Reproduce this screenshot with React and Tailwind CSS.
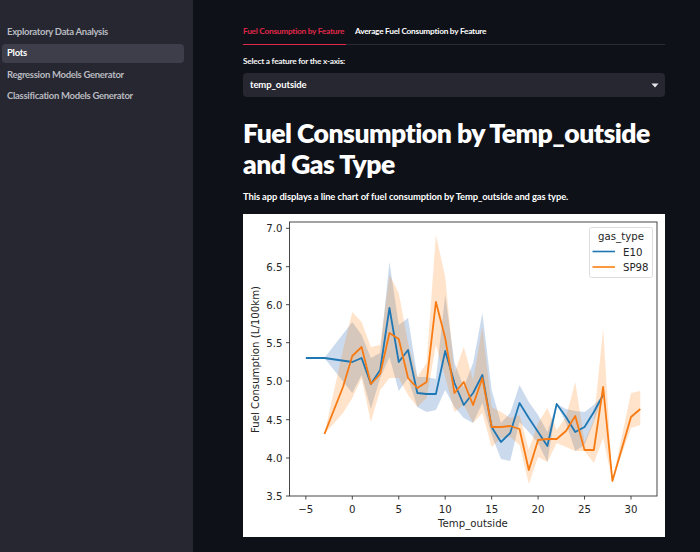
import React from 'react';

const navItems = ['Exploratory Data Analysis', 'Plots', 'Regression Models Generator', 'Classification Models Generator'];

// [temp, line y, band top, band bottom] in picture pixels
const e10 = [
  [-5, 358, 358, 358], [-3, 358, 358, 358], [0, 362, 322, 393], [1, 358, 335, 375], [2, 384, 358, 409],
  [3, 370, 353, 378], [4, 308, 262, 357], [5, 362, 325, 391], [6, 350, 318, 378], [7, 393, 377, 407],
  [8, 394, 377, 412], [9, 394, 379, 410], [10, 351, 295, 390], [11, 383, 363, 407], [12, 405, 387, 418],
  [13, 393, 363, 423], [14, 375, 313, 403], [15, 427, 390, 435], [16, 442, 423, 459], [17, 433, 413, 461],
  [18, 403, 385, 422], [19, 418, 402, 432], [20, 432, 415, 443], [21, 446, 432, 462], [22, 404, 404, 404],
  [23, 417, 409, 423], [24, 432, 411, 451], [25, 427, 412, 445], [26, 412, 405, 422], [27, 395, 395, 395],
];
const sp98 = [
  [-3, 434, 434, 434], [-1, 387, 350, 413], [0, 356, 312, 398], [1, 347, 322, 378], [2, 384, 347, 422],
  [3, 374, 345, 390], [4, 333, 275, 378], [5, 339, 293, 378], [6, 378, 343, 395], [7, 388, 377, 407],
  [8, 382, 363, 398], [9, 302, 235, 345], [10, 338, 277, 377], [11, 393, 373, 412], [12, 382, 347, 405],
  [13, 405, 380, 423], [14, 378, 327, 413], [15, 427, 407, 447], [16, 427, 412, 438], [17, 426, 418, 437],
  [18, 429, 415, 445], [19, 470, 450, 484], [20, 440, 423, 457], [21, 439, 408, 462], [22, 439, 430, 443],
  [23, 431, 417, 447], [24, 416, 382, 451], [25, 450, 442, 451], [26, 450, 420, 463], [27, 387, 329, 438],
  [28, 481, 481, 481], [30, 417, 393, 428], [31, 409, 391, 425],
];

const px = (t) => 352.3 + 9.29 * t;
const linePath = (rows) => rows.map((r) => `${px(r[0])},${r[1]}`).join(' ');
const bandPath = (rows) =>
  [...rows.map((r) => `${px(r[0])},${r[2]}`), ...[...rows].reverse().map((r) => `${px(r[0])},${r[3]}`)].join(' ');

const xTicks = [-5, 0, 5, 10, 15, 20, 25, 30];
const yTicks = [
  ['7.0', 228.3], ['6.5', 266.7], ['6.0', 304.7], ['5.5', 342.7],
  ['5.0', 381], ['4.5', 419.7], ['4.0', 458], ['3.5', 496],
];

const Chart = () => (
  <svg viewBox="243 214 422 323" className="block w-[422px] h-[323px] bg-white" fontFamily="'DejaVu Sans', sans-serif" fill="#262626">
    <polygon points={bandPath(e10)} fill="#2f6fb8" fillOpacity="0.25" />
    <polygon points={bandPath(sp98)} fill="#ff7f0e" fillOpacity="0.22" />
    <polyline points={linePath(e10)} fill="none" stroke="#1f77b4" strokeWidth="1.8" strokeLinejoin="round" />
    <polyline points={linePath(sp98)} fill="none" stroke="#f77a12" strokeWidth="1.8" strokeLinejoin="round" />
    <rect x="289.5" y="222" width="367.5" height="274" fill="none" stroke="#333" strokeWidth="0.9" />
    {xTicks.map((t) => (
      <g key={t}>
        <line x1={px(t)} x2={px(t)} y1="496" y2="499.5" stroke="#333" strokeWidth="0.9" />
        <text x={px(t)} y="513" fontSize="10.2" textAnchor="middle">{t < 0 ? `\u2212${-t}` : t}</text>
      </g>
    ))}
    {yTicks.map(([label, y]) => (
      <g key={label}>
        <line x1="286" x2="289.5" y1={y} y2={y} stroke="#333" strokeWidth="0.9" />
        <text x="282.5" y={y + 4} fontSize="10.2" textAnchor="end">{label}</text>
      </g>
    ))}
    <text x="473" y="527" fontSize="10.2" textAnchor="middle">Temp_outside</text>
    <text transform="translate(258.5 359.5) rotate(-90)" fontSize="10.2" textAnchor="middle">Fuel Consumption (L/100km)</text>
    <rect x="589.5" y="227.5" width="63" height="50" rx="2" fill="#fff" fillOpacity="0.8" stroke="#d9d9d9" strokeWidth="0.9" />
    <text x="621" y="240" fontSize="10.2" textAnchor="middle">gas_type</text>
    <line x1="592.5" x2="615" y1="251.5" y2="251.5" stroke="#1f77b4" strokeWidth="1.6" />
    <line x1="592.5" x2="615" y1="267" y2="267" stroke="#ff7f0e" strokeWidth="1.6" />
    <text x="623" y="255.5" fontSize="10.2">E10</text>
    <text x="623" y="271" fontSize="10.2">SP98</text>
  </svg>
);

export default function App() {
  return (
    <div className="flex w-[700px] h-[552px] overflow-hidden bg-[#0e1117] font-['Lato',sans-serif] text-white">
      <aside className="w-[193px] shrink-0 bg-[#262730] pt-[22.5px] px-[2px]">
        {navItems.map((item, i) => (
          <div
            key={item}
            className={`w-[182px] h-[19px] mb-[2.5px] flex items-center pl-[5px] rounded text-[9.5px] tracking-[-0.3px] font-bold whitespace-nowrap ${
              i === 1 ? 'bg-[#3d3e49] text-white' : 'text-[#b9bac0]'
            }`}
          >
            {item}
          </div>
        ))}
      </aside>

      <main className="flex-1 pl-[50px] pt-[21px]">
        <div className="w-[422px]">
          <div className="flex h-[24px] border-b-[1.5px] border-[#2a2b35]">
            <div className="w-[103px] -mb-[1.5px] h-[24px] pt-[4px] border-b-[1.5px] border-[#e0284a] text-[8.3px] tracking-[-0.25px] font-bold text-[#e0284a] whitespace-nowrap">
              Fuel Consumption by Feature
            </div>
            <div className="ml-[9px] pt-[4px] text-[8.3px] tracking-[-0.25px] font-bold whitespace-nowrap">Average Fuel Consumption by Feature</div>
          </div>
          <div className="mt-[10px] h-[13px] text-[8.3px] tracking-[-0.25px] font-bold leading-[13px] text-[#f4f4f5]">Select a feature for the x-axis:</div>
          <div className="mt-[5px] h-[24px] flex items-center justify-between px-[7px] pt-[1px] rounded bg-[#262730] text-[9.5px] tracking-[-0.1px] font-bold">
            <span>temp_outside</span>
            <svg width="8" height="5" viewBox="0 0 8 5" className="mr-[-1px]">
              <path d="M0.5 0.5h7L4 4.5z" fill="#e8e8ea" />
            </svg>
          </div>
          <h1 className="mt-[21px] text-[26.5px] tracking-[-0.5px] leading-[31px] font-extrabold">Fuel Consumption by Temp_outside and Gas Type</h1>
          <p className="mt-[10px] h-[13px] text-[9.4px] tracking-[-0.1px] leading-[13px] font-bold">
            This app displays a line chart of fuel consumption by Temp_outside and gas type.
          </p>
          <div className="mt-[11px]">
            <Chart />
          </div>
        </div>
      </main>
    </div>
  );
}
